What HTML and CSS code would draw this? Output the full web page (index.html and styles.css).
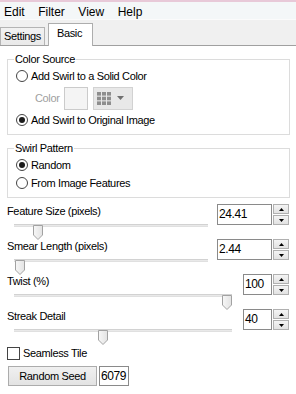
FILE: index.html
```html
<!DOCTYPE html>
<html>
<head>
<meta charset="utf-8">
<link rel="stylesheet" href="styles.css">
</head>
<body>
<div class="topline"></div>
<div class="menubar"><span class="menu">Edit</span><span class="menu">Filter</span><span class="menu">View</span><span class="menu">Help</span></div>
<div class="tabstrip"><div class="tab">Settings</div><div class="tab tab-active">Basic</div></div>
<div class="content">
  <fieldset class="group group-color">
    <legend>Color Source</legend>
    <div class="row row-radio"><span class="radio"></span><span class="label">Add Swirl to a Solid Color</span></div>
    <div class="row row-color">
      <span class="label label-disabled">Color</span>
      <span class="swatch"></span>
      <span class="picker">
        <svg class="grid-icon" width="14" height="13" viewBox="0 0 14 13">
          <rect x="0" y="0" width="4" height="3.6" /><rect x="5" y="0" width="4" height="3.6" /><rect x="10" y="0" width="4" height="3.6" />
          <rect x="0" y="4.7" width="4" height="3.6" /><rect x="5" y="4.7" width="4" height="3.6" /><rect x="10" y="4.7" width="4" height="3.6" />
          <rect x="0" y="9.4" width="4" height="3.6" /><rect x="5" y="9.4" width="4" height="3.6" /><rect x="10" y="9.4" width="4" height="3.6" />
        </svg>
        <svg class="drop-icon" width="7" height="4" viewBox="0 0 7 4"><path d="M0 0 H7 L3.5 4 Z"/></svg>
      </span>
    </div>
    <div class="row row-radio"><span class="radio radio-on"></span><span class="label">Add Swirl to Original Image</span></div>
  </fieldset>

  <fieldset class="group group-pattern">
    <legend>Swirl Pattern</legend>
    <div class="row row-radio2"><span class="radio radio-on"></span><span class="label">Random</span></div>
    <div class="row row-radio2"><span class="radio"></span><span class="label">From Image Features</span></div>
  </fieldset>

  <div class="sliders">
    <div class="sblock">
      <div class="scol">
        <div class="slabel">Feature Size (pixels)</div>
        <div class="slider"><div class="track"></div><svg class="thumb" style="left:19px" width="10" height="15" viewBox="0 0 10 15"><defs><linearGradient id="tg1" x1="0" y1="0" x2="1" y2="0"><stop offset="0" stop-color="#f7f7f7"/><stop offset="1" stop-color="#e3e3e3"/></linearGradient></defs><path d="M0.5 0.5 H9.5 V10 L5 14.5 L0.5 10 Z" fill="url(#tg1)" stroke="#a2a2a2"/></svg></div>
      </div>
      <div class="spin"><div class="spin-box">24.41</div><div class="spin-btns"><span class="sbtn"><svg width="5" height="3" viewBox="0 0 5 3"><path d="M2.5 0 L5 3 H0 Z"/></svg></span><span class="sbtn"><svg width="5" height="3" viewBox="0 0 5 3"><path d="M0 0 H5 L2.5 3 Z"/></svg></span></div></div>
    </div>
    <div class="sblock">
      <div class="scol">
        <div class="slabel">Smear Length (pixels)</div>
        <div class="slider"><div class="track"></div><svg class="thumb" style="left:1px" width="10" height="15" viewBox="0 0 10 15"><path d="M0.5 0.5 H9.5 V10 L5 14.5 L0.5 10 Z" fill="url(#tg1)" stroke="#a2a2a2"/></svg></div>
      </div>
      <div class="spin"><div class="spin-box">2.44</div><div class="spin-btns"><span class="sbtn"><svg width="5" height="3" viewBox="0 0 5 3"><path d="M2.5 0 L5 3 H0 Z"/></svg></span><span class="sbtn"><svg width="5" height="3" viewBox="0 0 5 3"><path d="M0 0 H5 L2.5 3 Z"/></svg></span></div></div>
    </div>
    <div class="sblock">
      <div class="scol">
        <div class="slabel">Twist (%)</div>
        <div class="slider slider-narrow"><div class="track"></div><svg class="thumb" style="left:208px" width="10" height="15" viewBox="0 0 10 15"><path d="M0.5 0.5 H9.5 V10 L5 14.5 L0.5 10 Z" fill="url(#tg1)" stroke="#a2a2a2"/></svg></div>
      </div>
      <div class="spin"><div class="spin-box spin-box-narrow">100</div><div class="spin-btns"><span class="sbtn"><svg width="5" height="3" viewBox="0 0 5 3"><path d="M2.5 0 L5 3 H0 Z"/></svg></span><span class="sbtn"><svg width="5" height="3" viewBox="0 0 5 3"><path d="M0 0 H5 L2.5 3 Z"/></svg></span></div></div>
    </div>
    <div class="sblock">
      <div class="scol">
        <div class="slabel">Streak Detail</div>
        <div class="slider slider-narrow"><div class="track"></div><svg class="thumb" style="left:84px" width="10" height="15" viewBox="0 0 10 15"><path d="M0.5 0.5 H9.5 V10 L5 14.5 L0.5 10 Z" fill="url(#tg1)" stroke="#a2a2a2"/></svg></div>
      </div>
      <div class="spin"><div class="spin-box spin-box-narrow">40</div><div class="spin-btns"><span class="sbtn"><svg width="5" height="3" viewBox="0 0 5 3"><path d="M2.5 0 L5 3 H0 Z"/></svg></span><span class="sbtn"><svg width="5" height="3" viewBox="0 0 5 3"><path d="M0 0 H5 L2.5 3 Z"/></svg></span></div></div>
    </div>
  </div>

  <div class="check-row"><span class="checkbox"></span><span class="label">Seamless Tile</span></div>
  <div class="button-row"><div class="btn">Random Seed</div><div class="seed">6079</div></div>
</div>
</body>
</html>
```

FILE: styles.css
```css
* { box-sizing: border-box; }
html, body { margin: 0; padding: 0; }
body {
  width: 296px;
  height: 394px;
  overflow: hidden;
  background: #ffffff;
  font-family: "Liberation Sans", Arial, sans-serif;
  font-size: 11px;
  color: #000;
}
.label, .slabel, legend, .tab, .btn { letter-spacing: -0.35px; }

.topline { height: 2px; background: #e8c9d8; }
.menubar {
  height: 18px;
  background: #f4f7f8;
  border-bottom: 1px solid #fbfbfb;
  display: flex;
  padding: 3px 0 0 4px;
  line-height: 14px;
  font-size: 12px;
}
.menu { margin-right: 13.5px; }

.tabstrip {
  height: 26px;
  background: #f0f0f0;
  border-bottom: 1px solid #a0a0a0;
  display: flex;
  align-items: flex-end;
}
.tab {
  height: 18px;
  padding: 0 3px 0 3px;
  border: 1px solid #b4b4b4;
  border-bottom: none;
  background: linear-gradient(#f2f2f2, #e9e9e9);
  line-height: 16px;
}
.tab-active {
  height: 23px;
  margin-left: 3px;
  margin-bottom: -1px;
  padding: 0 10px 0 8px;
  background: #ffffff;
  border-color: #adadad;
  line-height: 19px;
}

.content { padding: 6px 6px 0 7px; }

.group {
  margin: 0;
  padding: 0 0 4px 8px;
  border: 1px solid #dcdcdc;
  min-width: 0;
}
.group legend {
  padding: 0 1px;
  margin-left: -2px;
  height: 14px;
  line-height: 14px;
}
.group-pattern { margin-top: 6px; padding-top: 1px; padding-bottom: 5px; }

.row { display: flex; align-items: center; }
.row-radio { height: 20px; }
.row-radio2 { height: 18px; }
.row-color { height: 24px; }

.radio {
  width: 12px;
  height: 12px;
  border-radius: 50%;
  border: 1px solid #444;
  background: #fff;
  margin-right: 3px;
  display: flex;
  align-items: center;
  justify-content: center;
  flex: none;
}
.radio-on::after {
  content: "";
  width: 6px;
  height: 6px;
  border-radius: 50%;
  background: #1c1c1c;
}

.label-disabled { color: #a0a0a0; width: 29px; margin-left: 19px; flex: none; }
.swatch {
  width: 24px;
  height: 23px;
  border: 1px solid #cbcbcb;
  background: #f4f4f4;
  flex: none;
}
.picker {
  width: 40px;
  height: 23px;
  margin-left: 5px;
  border: 1px solid #d2d2d2;
  background: #e8e8e8;
  display: flex;
  align-items: center;
  padding-left: 3px;
  flex: none;
}
.grid-icon { fill: #8e8e8e; display: block; }
.drop-icon { fill: #707070; display: block; margin-left: 6px; }

.sliders { margin-top: 6px; margin-right: 1px; }
.sblock { display: flex; align-items: flex-start; height: 35px; }
.scol { flex: 1; min-width: 0; }
.slabel { height: 14px; line-height: 14px; }
.slider { position: relative; height: 18px; margin: 0 9px 0 7px; }
.slider-narrow { margin-right: 11px; }
.track {
  margin-top: 6px;
  height: 3px;
  background: #e9e9e9;
  border-top: 1px solid #d2d2d2;
  border-bottom: 1px solid #e0e0e0;
}
.thumb { position: absolute; top: 1px; display: block; }

.spin { display: flex; height: 21px; flex: none; }
.spin-box {
  width: 55px;
  height: 21px;
  border: 1px solid #8a8a8a;
  background: #fff;
  font-size: 12px;
  letter-spacing: -0.4px;
  line-height: 19px;
  padding-left: 1px;
}
.spin-box-narrow { width: 29px; }
.spin-btns {
  width: 16px;
  margin-left: 1px;
  display: flex;
  flex-direction: column;
  justify-content: space-between;
}
.sbtn {
  height: 10px;
  border: 1px solid #b0b0b0;
  background: linear-gradient(#f4f4f4, #e2e2e2);
  display: flex;
  align-items: center;
  justify-content: center;
}
.sbtn svg { display: block; fill: #000; }

.check-row { display: flex; align-items: center; height: 14px; margin-top: 2px; }
.checkbox {
  width: 13px;
  height: 13px;
  border: 1px solid #444;
  background: #fff;
  margin-right: 3px;
  flex: none;
}
.button-row { display: flex; height: 20px; margin-top: 6px; }
.btn {
  width: 89px;
  margin-left: 1px;
  border: 1px solid #acacac;
  background: linear-gradient(#f0f0f0, #e3e3e3);
  text-align: center;
  line-height: 18px;
}
.seed {
  width: 30px;
  margin-left: 2px;
  border: 1px solid #8a8a8a;
  font-size: 12px;
  letter-spacing: -0.4px;
  line-height: 18px;
  padding-left: 1px;
}
```
